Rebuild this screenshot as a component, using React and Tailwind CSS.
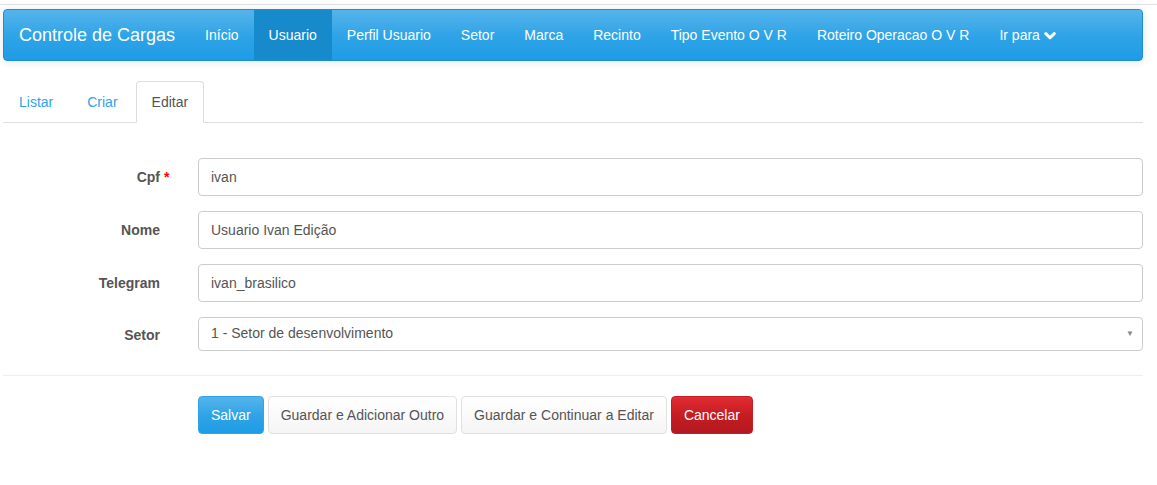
import React from "react";

const navItems = ["Início", "Usuario", "Perfil Usuario", "Setor", "Marca", "Recinto", "Tipo Evento O V R", "Roteiro Operacao O V R"];

const blueBtn = "bg-gradient-to-b from-[#54b4eb] via-[#2fa4e7] to-[#1d9ce5]";

const Field = ({ label, required, value }) => (
  <div className="flex items-center mb-[15px]">
    <label className="w-[157px] text-right font-bold text-[#555] relative">
      {label}
      {required && <span className="absolute left-[161px] text-[#ff0000]">*</span>}
    </label>
    <input
      type="text"
      defaultValue={value}
      className="ml-[38px] flex-1 h-[38px] px-3 border border-[#ccc] rounded text-[#555] bg-white outline-none"
    />
  </div>
);

const App = () => {
  return (
    <div className="bg-white min-h-[485px] text-[14px] leading-5 text-[#555]" style={{ fontFamily: '"Liberation Sans", Arial, sans-serif' }}>
      <div className="h-[4px]" />
      <div className="border-t border-[#e2e2e2] h-[5px]" />
      <div className="ml-[3px] w-[1140px]">
        <div className={`h-[52px] flex items-stretch rounded border border-[#1990d6] shadow-[0_1px_10px_rgba(0,0,0,0.1)] ${blueBtn}`}>
          <div className="pl-[15px] pr-[15px] flex items-center text-[18px] text-white">Controle de Cargas</div>
          {navItems.map((item) => (
            <div
              key={item}
              className={`px-[15px] flex items-center text-white ${item === "Usuario" ? "bg-[#178acc]" : ""}`}
            >
              {item}
            </div>
          ))}
          <div className="px-[15px] flex items-center text-white gap-[4px]">
            Ir para
            <svg width="12" height="10" viewBox="0 0 12 10" className="mt-[1px]">
              <path d="M1.8 2.6 L6 6.8 L10.2 2.6" fill="none" stroke="white" strokeWidth="3" strokeLinecap="round" strokeLinejoin="round" />
            </svg>
          </div>
        </div>

        <div className="mt-[20px] flex border-b border-[#ddd] h-[42px]">
          <div className="px-[15px] pt-[10px] mr-[2px] border border-transparent text-[#2fa4e7]">Listar</div>
          <div className="px-[15px] pt-[10px] mr-[2px] border border-transparent text-[#2fa4e7]">Criar</div>
          <div className="px-[15px] pt-[10px] border border-[#ddd] border-b-white rounded-t bg-white -mb-px text-[#555] h-[42px]">
            Editar
          </div>
        </div>

        <form className="mt-[35px]">
          <Field label="Cpf" required value="ivan" />
          <Field label="Nome" value="Usuario Ivan Edição" />
          <Field label="Telegram" value="ivan_brasilico" />
          <div className="flex items-center">
            <label className="w-[157px] text-right font-bold text-[#555] mt-[2px]">Setor</label>
            <div className="ml-[38px] flex-1 h-[34px] px-3 border border-[#ccc] rounded text-[#555] bg-white flex items-center justify-between">
              <span className="-mt-[2px]">1 - Setor de desenvolvimento</span>
              <span className="text-[8px] text-[#888] -mr-[4px]">▼</span>
            </div>
          </div>

          <div className="mt-[24px] border-t border-[#eee]" />

          <div className="mt-[20px] ml-[195px] flex gap-[4px]">
            <button type="button" className={`h-[38px] px-3 rounded text-white border border-[#2fa4e7] ${blueBtn}`}>Salvar</button>
            <button type="button" className="h-[38px] px-3 rounded text-[#555] border border-[#e0e0e0] bg-gradient-to-b from-white to-[#f5f5f5]">Guardar e Adicionar Outro</button>
            <button type="button" className="h-[38px] px-3 rounded text-[#555] border border-[#e0e0e0] bg-gradient-to-b from-white to-[#f5f5f5]">Guardar e Continuar a Editar</button>
            <button type="button" className="h-[38px] px-3 rounded text-white border border-[#c71c22] bg-gradient-to-b from-[#e12c33] via-[#c71c22] to-[#b11920]">Cancelar</button>
          </div>
        </form>
      </div>
    </div>
  );
};

export default App;
